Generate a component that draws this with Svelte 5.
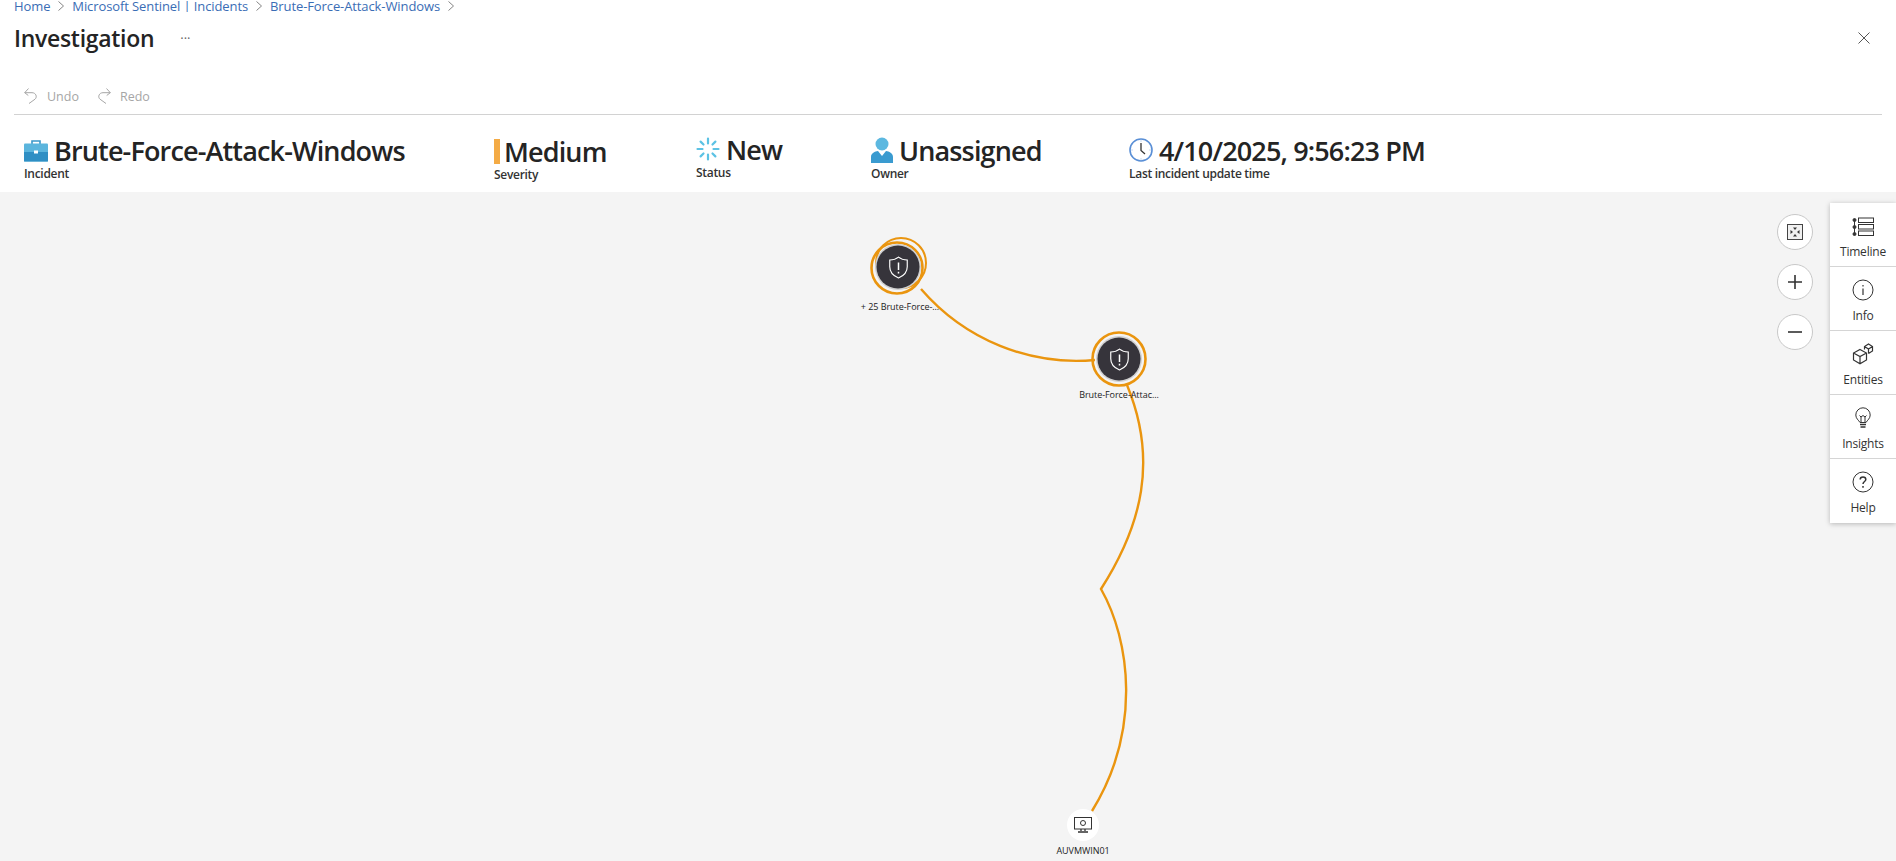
<script>
  const crumbs = ['Home', 'Microsoft Sentinel | Incidents', 'Brute-Force-Attack-Windows'];
  const tools = ['Timeline', 'Info', 'Entities', 'Insights', 'Help'];
</script>

<div class="page">
  <header class="head">
    <nav class="crumbs">
      {#each crumbs as c}
        <a href="#top">{c}</a>
        <svg class="chev" width="8" height="10" viewBox="0 0 8 10"><path d="M1.5 0.5 6.5 5 1.5 9.5" fill="none" stroke="#777" stroke-width="0.9"/></svg>
      {/each}
    </nav>
    <div class="titlebar">
      <h1>Investigation</h1>
      <span class="more">···</span>
      <svg class="close" width="12" height="12" viewBox="0 0 12 12"><path d="M0.5 0.5 11.5 11.5M11.5 0.5 0.5 11.5" stroke="#555" stroke-width="1"/></svg>
    </div>
    <div class="toolbar">
      <span class="tool">
        <svg width="14" height="16" viewBox="0 0 14 16"><path d="M4.500 0.500 0.700 4.700 4.300 7.500M0.700 4.700H8C12 4.700 13.500 9 11 11.200L5 15.500" fill="none" stroke="#a6a6a6"/></svg>
        Undo
      </span>
      <span class="tool">
        <svg width="14" height="16" viewBox="0 0 14 16"><path d="M9.500 0.500 13.300 4.700 9.700 7.500M13.300 4.700H6C2 4.700 .5 9 3 11.200L9 15.500" fill="none" stroke="#a6a6a6"/></svg>
        Redo
      </span>
    </div>
  </header>

  <section class="summary">
    <div class="item incident">
      <div class="value">
        <svg width="24" height="24" viewBox="0 0 24 24">
          <path d="M8 6V3h8v3" fill="none" stroke="#3a97c9" stroke-width="1.600"/>
          <rect x="0" y="5.500" width="24" height="18" rx="1" fill="#5bb5dd"/>
          <rect x="0" y="14" width="24" height="9.500" fill="#2f8fc4"/>
          <rect x="10" y="12.500" width="4" height="3" fill="#fff"/>
        </svg>
        <span>Brute-Force-Attack-Windows</span>
      </div>
      <div class="label">Incident</div>
    </div>
    <div class="item severity">
      <div class="value"><i class="bar"></i><span>Medium</span></div>
      <div class="label">Severity</div>
    </div>
    <div class="item status">
      <div class="value">
        <svg width="24" height="24" viewBox="0 0 24 24" stroke="#5cc2e4" stroke-width="2.200" stroke-linecap="round">
          <path d="M12 1.500v5M12 17.500v5M1.500 12h5M17.500 12h5M4.600 4.600 7.500 7.500M16.500 16.500l2.900 2.900M19.400 4.600 16.500 7.500M7.500 16.500l-2.900 2.900"/>
        </svg>
        <span>New</span>
      </div>
      <div class="label">Status</div>
    </div>
    <div class="item owner">
      <div class="value">
        <svg width="22" height="26" viewBox="0 0 22 26">
          <circle cx="11" cy="7" r="6.500" fill="#5cb8e0"/>
          <path d="M0 26V20C0 16 4 14.500 7 14l4 5 4-5c3 .5 7 2 7 6v6z" fill="#3a9bd0"/>
        </svg>
        <span>Unassigned</span>
      </div>
      <div class="label">Owner</div>
    </div>
    <div class="item updated">
      <div class="value">
        <svg width="24" height="24" viewBox="0 0 24 24">
          <circle cx="12" cy="12" r="11" fill="#fff" stroke="#5a8fd6" stroke-width="1.600"/>
          <path d="M12 5v7.500l4 3.500" fill="none" stroke="#333" stroke-width="1.300"/>
          <path d="M12 2.500v1M12 20.500v1M2.500 12h1M20.500 12h1" stroke="#8fb4e4"/>
        </svg>
        <span>4/10/2025, 9:56:23 PM</span>
      </div>
      <div class="label">Last incident update time</div>
    </div>
  </section>

  <main class="canvas">
    <svg class="edges" width="1896" height="669" viewBox="0 192 1896 669">
      <g fill="none" stroke="#ea950f" stroke-width="2.400">
        <path d="M921 289C965 340 1030 366 1095 360"/>
        <path d="M1127 385C1158 460 1142 525 1101 589C1130 640 1142 730 1092 811"/>
        <circle cx="897" cy="268" r="25.500" stroke-width="2.600"/>
        <circle cx="901" cy="263" r="25" stroke-width="2"/>
        <circle cx="1119" cy="359" r="26.500" stroke-width="2.600"/>
      </g>
    </svg>

    <div class="node alert first">
      <svg width="20" height="24" viewBox="0 0 24 28"><path d="M12 1.500C15 4 18.500 5 22.500 5V13C22.500 19.500 18 24 12 26.500 6 24 1.500 19.500 1.500 13V5C5.500 5 9 4 12 1.500Z" fill="none" stroke="#fff" stroke-width="1.400"/><path d="M12 8v9M12 19v2.200" stroke="#fff" stroke-width="1.800"/></svg>
    </div>
    <div class="caption first-cap">+ 25 Brute-Force-...</div>

    <div class="node alert second">
      <svg width="20" height="24" viewBox="0 0 24 28"><path d="M12 1.500C15 4 18.500 5 22.500 5V13C22.500 19.500 18 24 12 26.500 6 24 1.500 19.500 1.500 13V5C5.500 5 9 4 12 1.500Z" fill="none" stroke="#fff" stroke-width="1.400"/><path d="M12 8v9M12 19v2.200" stroke="#fff" stroke-width="1.800"/></svg>
    </div>
    <div class="caption second-cap">Brute-Force-Attac...</div>

    <div class="node host">
      <svg width="18" height="16" viewBox="0 0 18 16" fill="none" stroke="#333"><rect x="0.500" y="0.500" width="17" height="11.500"/><circle cx="9" cy="6" r="2.500"/><path d="M7 12v2M11 12v2M4 15h10" stroke-width="1.300"/></svg>
    </div>
    <div class="caption host-cap">AUVMWIN01</div>

    <div class="zoom">
      <button aria-label="Fit">
        <svg width="16" height="16" viewBox="0 0 16 16"><rect x="0.500" y="0.500" width="15" height="15" fill="#f0f0f0" stroke="#444"/><path d="M8 6 6 3.500h4zM8 10 6 12.500h4zM6 8 3.500 6v4zM10 8 12.500 6v4z" fill="#333"/></svg>
      </button>
      <button aria-label="Zoom in">
        <svg width="16" height="16" viewBox="0 0 16 16"><path d="M8 1v14M1 8h14" stroke="#333" stroke-width="1.600"/></svg>
      </button>
      <button aria-label="Zoom out">
        <svg width="16" height="16" viewBox="0 0 16 16"><path d="M1 8h14" stroke="#333" stroke-width="1.600"/></svg>
      </button>
    </div>

    <aside class="side">
      {#each tools as t}
        <div class="side-item">
          {#if t === 'Timeline'}
            <svg width="22" height="20" viewBox="0 0 22 20" fill="none" stroke="#333"><rect x="6.500" y="1" width="15" height="4.500"/><rect x="6.500" y="7.500" width="15" height="4.500"/><rect x="6.500" y="14" width="15" height="4.500"/><path d="M2.500 3v14"/><circle cx="2.500" cy="3" r="1.500" fill="#333"/><circle cx="2.500" cy="10" r="1.500" fill="#333"/><circle cx="2.500" cy="17" r="1.500" fill="#333"/></svg>
          {:else if t === 'Info'}
            <svg width="22" height="22" viewBox="0 0 22 22" fill="none" stroke="#333"><circle cx="11" cy="11" r="10"/><path d="M11 9.500v6.500M11 6v1.500" stroke-width="1.200"/></svg>
          {:else if t === 'Entities'}
            <svg width="22" height="22" viewBox="0 0 22 22" fill="none" stroke="#333" stroke-width="1.200"><path d="M8 6.500 14.500 10v7L8 20.800 1.500 17v-7zM1.500 10 8 13.500 14.500 10M8 13.500v7.300"/><path d="M12.500 6.500V3.500L16.500 1l4 2.500V8L16.500 10.500M12.500 3.500l4 2.500 4-2.500M16.500 6v4.500"/></svg>
          {:else if t === 'Insights'}
            <svg width="16" height="22" viewBox="0 0 16 22" fill="none" stroke="#333"><path d="M5 15.500C3.500 13 .8 11.500.8 8A7.200 7.200 0 0 1 15.200 8C15.200 11.500 12.500 13 11 15.500z"/><path d="M6 15V9.500M10 15V9.500M4.500 8.500 6 10l2-1.500 2 1.500 1.500-1.500"/><path d="M5 17.500h6M5.500 20h5" stroke-width="1.500"/></svg>
          {:else}
            <svg width="22" height="22" viewBox="0 0 22 22" fill="none" stroke="#333"><circle cx="11" cy="11" r="10"/><path d="M8.200 8.500C8.200 6.800 9.500 6 11 6s2.800 1 2.800 2.500C13.800 10.500 11 10.500 11 13M11 15v1.800" stroke-width="1.500"/></svg>
          {/if}
          <span>{t}</span>
        </div>
      {/each}
    </aside>
  </main>
</div>

<style>
  :global(body) {
    margin: 0;
    background: #fff;
    overflow: hidden;
  }

  .page {
    display: flex;
    flex-direction: column;
    height: 861px;
    font-family: "Open Sans", "Noto Sans", sans-serif;
    color: #242424;
  }

  .head {
    padding: 0 14px;
  }

  .crumbs {
    display: flex;
    align-items: center;
    gap: 7px;
    height: 12px;
    overflow: hidden;
    font-size: 13px;
    letter-spacing: -0.1px;
  }

  .crumbs a {
    color: #3a6db5;
    text-decoration: none;
    white-space: nowrap;
  }

  .titlebar {
    display: flex;
    align-items: center;
    height: 42px;
    margin-top: 5px;
  }

  h1 {
    margin: 0;
    font-size: 23px;
    font-weight: 600;
    letter-spacing: -0.3px;
    color: #242424;
  }

  .more {
    margin-left: 26px;
    font-size: 13px;
    color: #666;
  }

  .close {
    margin-left: auto;
    margin-right: 12px;
  }

  .toolbar {
    display: flex;
    gap: 18px;
    align-items: center;
    height: 26px;
    margin-top: 24px;
    padding-left: 10px;
    padding-bottom: 5px;
    border-bottom: 1px solid #d2d2d2;
  }

  .tool {
    display: flex;
    align-items: center;
    gap: 9px;
    font-size: 12.5px;
    color: #a6a6a6;
  }

  .summary {
    display: flex;
    height: 77px;
    box-sizing: border-box;
    padding: 21px 0 0 24px;
  }

  .item {
    display: flex;
    flex-direction: column;
  }

  .incident { width: 470px; }
  .severity { width: 202px; padding-top: 1px; }
  .status { width: 175px; margin-top: -1px; }
  .owner { width: 258px; }

  .value {
    display: flex;
    align-items: center;
    gap: 6px;
    height: 28px;
    font-size: 27px;
    font-weight: 600;
    letter-spacing: -0.85px;
    color: #242424;
    white-space: nowrap;
  }

  .bar {
    width: 6px;
    height: 25px;
    background: #f4ab45;
    margin-right: -2px;
  }

  .label {
    font-size: 12px;
    font-weight: 600;
    line-height: 14px;
    margin-top: 3px;
    letter-spacing: -0.3px;
    color: #333;
  }

  .canvas {
    position: relative;
    flex: 1;
    background: #f4f4f4;
    overflow: hidden;
  }

  .edges {
    position: absolute;
    left: 0;
    top: 0;
  }

  .node {
    position: absolute;
    display: flex;
    align-items: center;
    justify-content: center;
    border-radius: 50%;
    transform: translate(-50%, -50%);
  }

  .alert {
    width: 43px;
    height: 43px;
    background: #36343b;
    box-shadow: 0 0 0 1.5px #cfcfcf;
  }

  .first { left: 898px; top: 75px; }
  .second { left: 1119px; top: 167px; }

  .host {
    left: 1083px;
    top: 633px;
    width: 32px;
    height: 32px;
    background: #fff;
  }

  .caption {
    position: absolute;
    font-size: 9px;
    line-height: 12px;
    letter-spacing: -0.05px;
    color: #222;
    transform: translateX(-50%);
    white-space: nowrap;
  }

  .first-cap { left: 900px; top: 109px; }
  .second-cap { left: 1119px; top: 197px; }
  .host-cap { left: 1083px; top: 653px; }

  .zoom {
    position: absolute;
    left: 1777px;
    top: 22px;
    display: flex;
    flex-direction: column;
    gap: 14px;
  }

  .zoom button {
    display: flex;
    align-items: center;
    justify-content: center;
    width: 36px;
    height: 36px;
    padding: 0;
    border: 1px solid #c8c8c8;
    border-radius: 50%;
    background: #fff;
  }

  .side {
    position: absolute;
    right: 0;
    top: 11px;
    width: 66px;
    background: #fff;
    box-shadow: 0 1px 5px rgba(0, 0, 0, 0.25);
  }

  .side-item {
    display: flex;
    flex-direction: column;
    align-items: center;
    justify-content: flex-end;
    gap: 7px;
    height: 64px;
    box-sizing: border-box;
    padding-bottom: 6px;
    border-bottom: 1px solid #d5d5d5;
    font-size: 12px;
    line-height: 16px;
    letter-spacing: -0.2px;
    color: #333;
  }

  .side-item:last-child {
    border-bottom: 0;
    padding-bottom: 7px;
  }
</style>
